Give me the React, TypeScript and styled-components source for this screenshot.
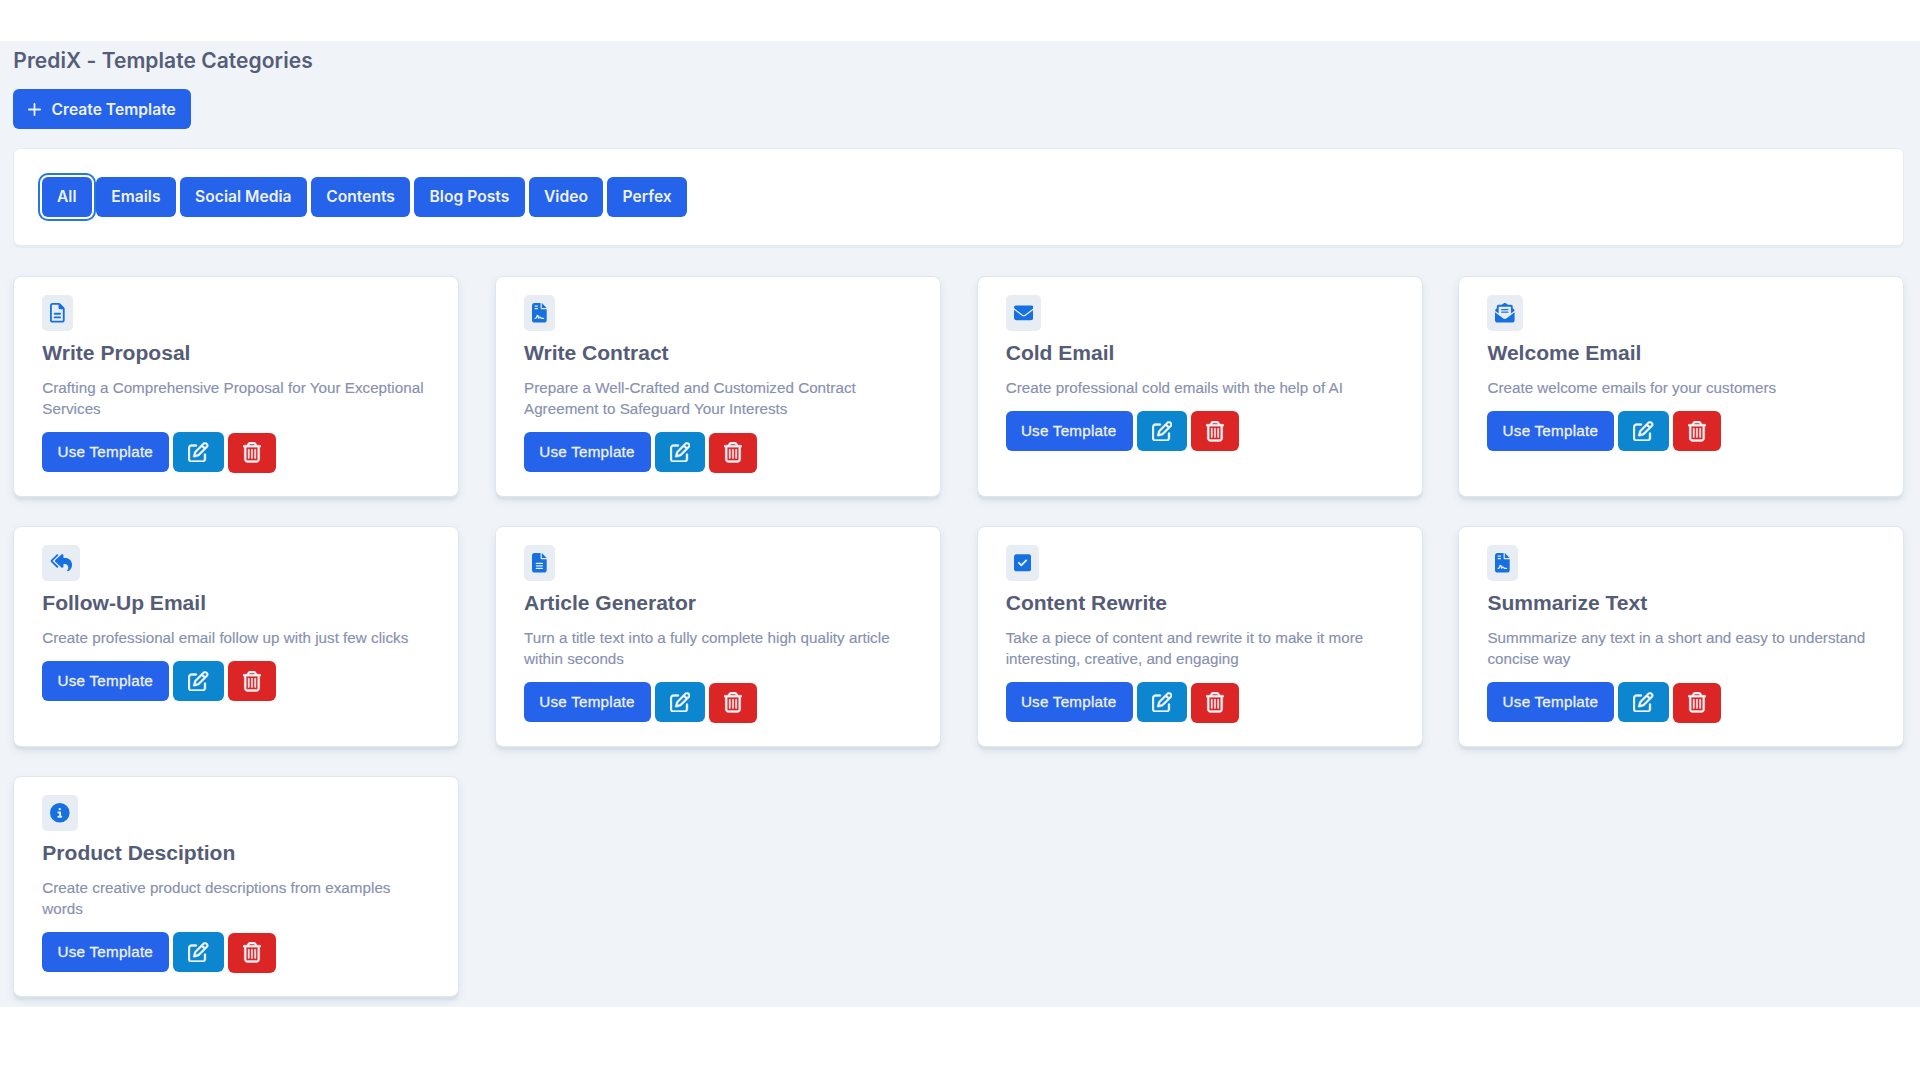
import React from "react";
import styled, { createGlobalStyle, css } from "styled-components";
import type { IconType } from "react-icons";
import {
  FaCircleInfo,
  FaEnvelope,
  FaEnvelopeOpenText,
  FaFileContract,
  FaFileLines,
  FaRegFileLines,
  FaRegPenToSquare,
  FaRegTrashCan,
  FaReplyAll,
  FaSquareCheck,
} from "react-icons/fa6";

const GlobalStyle = createGlobalStyle`
  * { box-sizing: border-box; }
  body { margin: 0; background: #fff; }
`;

const sans = `"Liberation Sans", Arial, sans-serif`;
const inter = `Inter, "Liberation Sans", sans-serif`;

const Page = styled.main`
  margin-top: 41px;
  height: 966px;
  padding: 5px 15.6px 0 13.3px;
  background: #f0f4f9;
  font-family: ${sans};
`;

const PageTitle = styled.h1`
  margin: 0;
  height: 43px;
  font: 600 21px/29px ${inter};
  letter-spacing: 0.05px;
  color: #565d78;
`;

const Button = styled.button<{ $active?: boolean }>`
  display: inline-flex;
  align-items: center;
  height: 40px;
  padding: 1px 15.2px 0;
  border: 0;
  border-radius: 6px;
  background: #2563eb;
  color: #eef2f8;
  font: 600 15.6px/22px ${inter};
  letter-spacing: 0.03px;
  white-space: nowrap;
  ${(p) =>
    p.$active &&
    css`
      outline: 2px solid #2478dc;
      outline-offset: 2.5px;
    `}
`;

const PlusIcon = styled.svg`
  width: 13px;
  height: 13px;
  margin-right: 10px;
`;

const FilterPanel = styled.section`
  display: flex;
  gap: 4.2px;
  height: 98.5px;
  margin: 18.5px 0 30px;
  padding: 28.2px 27.5px;
  border: 1px solid #e6ebf3;
  border-radius: 7px;
  background: #fff;
  box-shadow: 0 2px 1px #e6ebf2;
`;

const Grid = styled.section`
  display: grid;
  grid-template-columns: repeat(4, minmax(0, 1fr));
  grid-auto-rows: 220.5px;
  gap: 29.5px 35.7px;
`;

const Card = styled.article`
  padding: 18.3px 28px 0 28px;
  border: 1px solid #e0e6ed;
  border-radius: 8px;
  background: #fff;
  box-shadow: 0 4px 2px -1px #d8dfe5, 0 4px 8px rgba(100, 120, 150, 0.13);
`;

/* $ratio is the glyph's width in ems, so the badge hugs narrow and wide icons alike. */
const Badge = styled.div<{ $ratio: number }>`
  display: flex;
  align-items: center;
  width: fit-content;
  height: 35.5px;
  padding: 0 8px;
  border-radius: 5px;
  background: #e8edf3;
  color: #1670e0;
  font-size: 19.6px;

  svg {
    width: ${(p) => p.$ratio}em;
    height: 1em;
  }
`;

const CardTitle = styled.h2`
  margin: 8.3px 0 0;
  font: bold 21.05px/28px ${sans};
  color: #555c77;
`;

const Description = styled.p`
  margin: 9.5px 0 13px;
  font-size: 15.2px;
  line-height: 21.3px;
  letter-spacing: 0.025px;
  color: #8790b0;
  -webkit-text-stroke: 0.15px #8790b0;
`;

const Actions = styled.div`
  display: flex;
  gap: 4px;
`;

const UseButton = styled(Button)`
  width: 127px;
  padding: 0 0 0 15.2px;
  font: 400 15.2px/22px ${sans};
  letter-spacing: 0.25px;
  -webkit-text-stroke: 0.3px #eef2f8;
`;

const IconButton = styled(Button)<{ $danger?: boolean }>`
  justify-content: center;
  width: ${(p) => (p.$danger ? 48 : 50.3)}px;
  padding: 0;
  margin-top: ${(p) => (p.$danger ? 0.5 : 0)}px;
  background: ${(p) => (p.$danger ? "#dc2626" : "#0c87cf")};
  font-size: 20.5px;

  svg {
    width: ${(p) => (p.$danger ? 0.875 : 1)}em;
    height: 1em;
    stroke: currentColor;
    stroke-width: 10px;
  }
`;

const filters = ["All", "Emails", "Social Media", "Contents", "Blog Posts", "Video", "Perfex"];

const templates: { icon: IconType; ratio: number; title: string; text: string }[] = [
  { icon: FaRegFileLines, ratio: 0.75, title: "Write Proposal", text: "Crafting a Comprehensive Proposal for Your Exceptional Services" },
  { icon: FaFileContract, ratio: 0.75, title: "Write Contract", text: "Prepare a Well-Crafted and Customized Contract Agreement to Safeguard Your Interests" },
  { icon: FaEnvelope, ratio: 1, title: "Cold Email", text: "Create professional cold emails with the help of AI" },
  { icon: FaEnvelopeOpenText, ratio: 1, title: "Welcome Email", text: "Create welcome emails for your customers" },
  { icon: FaReplyAll, ratio: 1.125, title: "Follow-Up Email", text: "Create professional email follow up with just few clicks" },
  { icon: FaFileLines, ratio: 0.75, title: "Article Generator", text: "Turn a title text into a fully complete high quality article within seconds" },
  { icon: FaSquareCheck, ratio: 0.875, title: "Content Rewrite", text: "Take a piece of content and rewrite it to make it more interesting, creative, and engaging" },
  { icon: FaFileContract, ratio: 0.75, title: "Summarize Text", text: "Summmarize any text in a short and easy to understand concise way" },
  { icon: FaCircleInfo, ratio: 1, title: "Product Desciption", text: "Create creative product descriptions from examples words" },
];

export default function App() {
  return (
    <>
      <GlobalStyle />
      <Page>
        <PageTitle>PrediX - Template Categories</PageTitle>
        <Button>
          <PlusIcon viewBox="0 0 13 13" fill="none" stroke="currentColor" strokeWidth="1.8" strokeLinecap="round">
            <path d="M6.5 .9v11.2M.9 6.5h11.2" />
          </PlusIcon>
          Create Template
        </Button>
        <FilterPanel>
          {filters.map((name, i) => (
            <Button key={name} $active={i === 0}>
              {name}
            </Button>
          ))}
        </FilterPanel>
        <Grid>
          {templates.map(({ icon: Icon, ratio, title, text }) => (
            <Card key={title}>
              <Badge $ratio={ratio}>
                <Icon />
              </Badge>
              <CardTitle>{title}</CardTitle>
              <Description>{text}</Description>
              <Actions>
                <UseButton>Use Template</UseButton>
                <IconButton aria-label="Edit">
                  <FaRegPenToSquare />
                </IconButton>
                <IconButton $danger aria-label="Delete">
                  <FaRegTrashCan />
                </IconButton>
              </Actions>
            </Card>
          ))}
        </Grid>
      </Page>
    </>
  );
}
